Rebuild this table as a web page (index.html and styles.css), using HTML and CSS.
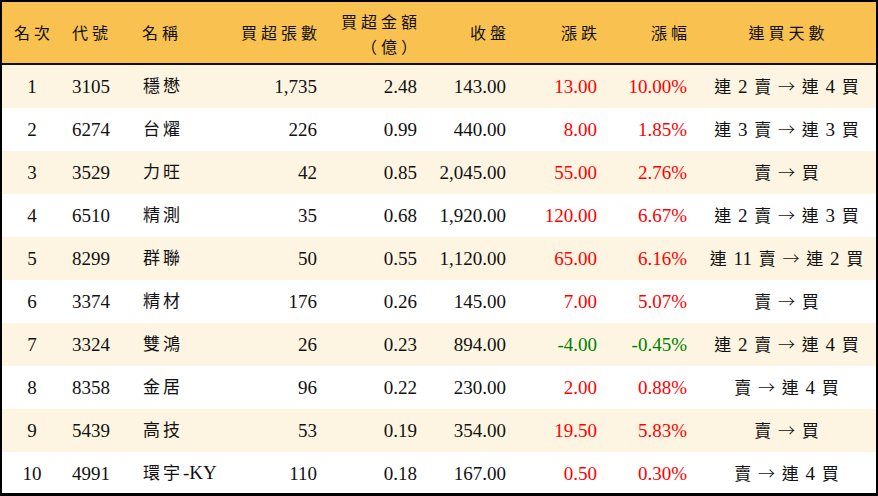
FILE: index.html
```html
<!DOCTYPE html>
<html lang="zh-Hant">
<head>
<meta charset="utf-8">
<title>買超排行</title>
<link rel="stylesheet" href="styles.css">
</head>
<body>
<div class="frame">
<table class="rank">
<colgroup>
<col class="c1"><col class="c2"><col class="c3"><col class="c4"><col class="c5"><col class="c6"><col class="c7"><col class="c8"><col class="c9">
</colgroup>
<thead>
<tr>
<th class="ctr">名次</th>
<th class="lft">代號</th>
<th class="lft">名稱</th>
<th class="rgt">買超張數</th>
<th class="rgt two">買超金額<br><span class="unit">（億）</span></th>
<th class="rgt">收盤</th>
<th class="rgt">漲跌</th>
<th class="rgt">漲幅</th>
<th class="ctr">連買天數</th>
</tr>
</thead>
<tbody>
<tr class="alt"><td class="ctr">1</td><td class="lft">3105</td><td class="lft name">穩懋</td><td class="rgt">1,735</td><td class="rgt">2.48</td><td class="rgt">143.00</td><td class="rgt up">13.00</td><td class="rgt up">10.00%</td><td class="ctr days">連 <span class="n">2</span> 賣 <span class="arr">→</span> 連 <span class="n">4</span> 買</td></tr>
<tr><td class="ctr">2</td><td class="lft">6274</td><td class="lft name">台燿</td><td class="rgt">226</td><td class="rgt">0.99</td><td class="rgt">440.00</td><td class="rgt up">8.00</td><td class="rgt up">1.85%</td><td class="ctr days">連 <span class="n">3</span> 賣 <span class="arr">→</span> 連 <span class="n">3</span> 買</td></tr>
<tr class="alt"><td class="ctr">3</td><td class="lft">3529</td><td class="lft name">力旺</td><td class="rgt">42</td><td class="rgt">0.85</td><td class="rgt">2,045.00</td><td class="rgt up">55.00</td><td class="rgt up">2.76%</td><td class="ctr days">賣 <span class="arr">→</span> 買</td></tr>
<tr><td class="ctr">4</td><td class="lft">6510</td><td class="lft name">精測</td><td class="rgt">35</td><td class="rgt">0.68</td><td class="rgt">1,920.00</td><td class="rgt up">120.00</td><td class="rgt up">6.67%</td><td class="ctr days">連 <span class="n">2</span> 賣 <span class="arr">→</span> 連 <span class="n">3</span> 買</td></tr>
<tr class="alt"><td class="ctr">5</td><td class="lft">8299</td><td class="lft name">群聯</td><td class="rgt">50</td><td class="rgt">0.55</td><td class="rgt">1,120.00</td><td class="rgt up">65.00</td><td class="rgt up">6.16%</td><td class="ctr days">連 <span class="n">11</span> 賣 <span class="arr">→</span> 連 <span class="n">2</span> 買</td></tr>
<tr><td class="ctr">6</td><td class="lft">3374</td><td class="lft name">精材</td><td class="rgt">176</td><td class="rgt">0.26</td><td class="rgt">145.00</td><td class="rgt up">7.00</td><td class="rgt up">5.07%</td><td class="ctr days">賣 <span class="arr">→</span> 買</td></tr>
<tr class="alt"><td class="ctr">7</td><td class="lft">3324</td><td class="lft name">雙鴻</td><td class="rgt">26</td><td class="rgt">0.23</td><td class="rgt">894.00</td><td class="rgt down">-4.00</td><td class="rgt down">-0.45%</td><td class="ctr days">連 <span class="n">2</span> 賣 <span class="arr">→</span> 連 <span class="n">4</span> 買</td></tr>
<tr><td class="ctr">8</td><td class="lft">8358</td><td class="lft name">金居</td><td class="rgt">96</td><td class="rgt">0.22</td><td class="rgt">230.00</td><td class="rgt up">2.00</td><td class="rgt up">0.88%</td><td class="ctr days">賣 <span class="arr">→</span> 連 <span class="n">4</span> 買</td></tr>
<tr class="alt"><td class="ctr">9</td><td class="lft">5439</td><td class="lft name">高技</td><td class="rgt">53</td><td class="rgt">0.19</td><td class="rgt">354.00</td><td class="rgt up">19.50</td><td class="rgt up">5.83%</td><td class="ctr days">賣 <span class="arr">→</span> 買</td></tr>
<tr><td class="ctr">10</td><td class="lft">4991</td><td class="lft name">環宇<span class="latin">-KY</span></td><td class="rgt">110</td><td class="rgt">0.18</td><td class="rgt">167.00</td><td class="rgt up">0.50</td><td class="rgt up">0.30%</td><td class="ctr days">賣 <span class="arr">→</span> 連 <span class="n">4</span> 買</td></tr>
</tbody>
</table>
</div>
</body>
</html>
```
FILE: styles.css
```css
html, body {
  margin: 0;
  padding: 0;
  background: #ffffff;
}
.frame {
  width: 878px;
  height: 496px;
  box-sizing: border-box;
  border: 2px solid #000000;
  border-bottom-width: 3px;
  background: #ffffff;
  overflow: hidden;
}
.rank {
  width: 874px;
  border-collapse: collapse;
  border-spacing: 0;
  table-layout: fixed;
  font-family: "Liberation Serif", "Noto Sans CJK TC", serif;
  font-size: 19px;
  color: #111111;
}
.c1 { width: 60px; }
.c2 { width: 70px; }
.c3 { width: 88px; }
.c4 { width: 107px; }
.c5 { width: 100px; }
.c6 { width: 89px; }
.c7 { width: 91px; }
.c8 { width: 90px; }
.c9 { width: 179px; }
.rank th {
  height: 59px;
  padding: 0;
  background: #f8c150;
  border-bottom: 2px solid #111111;
  font-family: "Noto Sans CJK TC", sans-serif;
  font-weight: 400;
  font-size: 16px;
  letter-spacing: 4px;
  line-height: 25px;
  vertical-align: middle;
  white-space: nowrap;
}
.rank th.two {
  padding-top: 2px;
}
.rank td {
  height: 43px;
  padding: 0;
  vertical-align: middle;
  white-space: nowrap;
  line-height: 22px;
}
.rank tr.alt td {
  background: #fdf5e1;
}
.ctr { text-align: center; }
.lft { text-align: left; padding-left: 10px !important; }
.rgt { text-align: right; padding-right: 10px !important; }
.rank th.rgt { padding-right: 6px !important; }
.rank th.ctr { padding-left: 4px !important; }
.rank th.lft { padding-left: 10px !important; }
.rank td.name {
  padding-left: 11px !important;
  font-size: 17px;
  letter-spacing: 3px;
}
.latin {
  font-size: 19px;
  letter-spacing: 0;
}
.name, .days {
  font-family: "Liberation Serif", "Noto Sans CJK TC", serif;
}
.days {
  font-size: 17px;
  word-spacing: 2.5px;
}
.n {
  font-size: 19px;
}
.arr {
  font-family: "Noto Sans CJK TC", sans-serif;
  font-weight: 300;
  font-size: 17px;
}
.up { color: #ff0000; }
.down { color: #008000; }
```
